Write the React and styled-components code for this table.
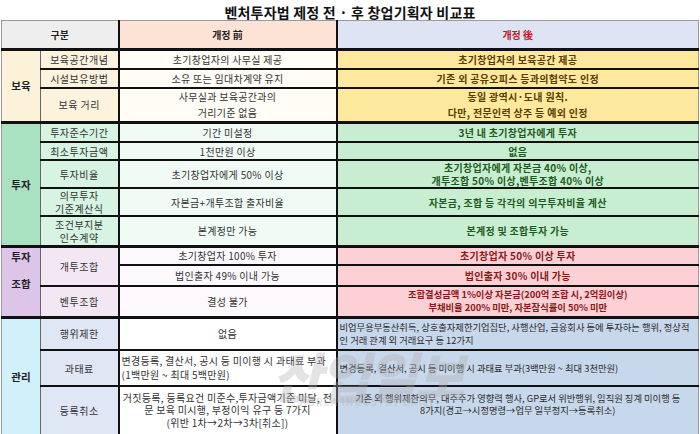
import React from 'react';
import styled, { createGlobalStyle } from 'styled-components';

const Global = createGlobalStyle`
    body {
        margin: 0;
        background: #fff;
        font-family: "Noto Sans CJK KR", "Noto Sans", sans-serif;
        color: #222;
    }
`

const tones = {
    yellow: { cat: '#fcf1d9', sub: '#fcf2dd', before: '#fffdf6', after: '#fde99e', ink: '#5a3b00', bold: true },
    green: { cat: '#a9e2c1', sub: '#d7f3e2', before: '#f1fbf6', after: '#c7eed0', ink: '#1e5a24', bold: true },
    purple: { cat: '#dcc5e8', sub: '#f3e7f4', before: '#fdf8fc', after: '#fdd0d6', ink: '#8a1818', bold: true },
    blue: { cat: '#d2f0f9', sub: '#dfe6f4', before: '#ffffff', after: '#c8d8ec', ink: '#2a2a2a', bold: false },
}

const Page = styled.div`
    position: relative;
    width: 700px;
    height: 434px;
    overflow: hidden;
`

const Title = styled.h1`
    margin: 0;
    height: 20px;
    line-height: 24px;
    text-align: center;
    font-size: 14px;
    font-weight: 700;
    color: #111;
    letter-spacing: 0.2px;
`

const Table = styled.table`
    margin-left: 1px;
    width: 697px;
    table-layout: fixed;
    border-collapse: collapse;
    border: 1px solid #9a9a9a;
`

const Row = styled.tr`
    height: ${p => p.$h}px;
`

const Head = styled.th`
    background: ${p => p.$bg};
    color: ${p => p.$red ? '#c4161c' : '#222'};
    font-size: 10px;
    font-weight: 700;
    text-align: center;
    padding: 0;
    border-bottom: 1px solid #9a9a9a;
    border-right: ${p => p.$last ? '1px solid #9a9a9a' : '2px solid #111'};
`

const Cat = styled.td`
    background: ${p => p.$bg};
    font-size: 10.5px;
    font-weight: 700;
    color: #222;
    text-align: center;
    vertical-align: ${p => p.$top ? 'top' : 'middle'};
    padding: ${p => p.$top ? '1px 0 0' : '0'};
    border-top: 3px solid #111;
    border-right: 1px solid #666;
`

const CatLine = styled.div`
    line-height: 15px;
    & + & {
        margin-top: 12px;
    }
`

const Sub = styled.td`
    background: ${p => p.$bg};
    font-size: 10px;
    letter-spacing: 0.5px;
    color: #333;
    text-align: center;
    line-height: 13px;
    padding: 0;
    border-top: ${p => p.$first ? '3px' : '2px'} solid #111;
    border-right: 2px solid #111;
`

const Cell = styled.td`
    background: ${p => p.$bg};
    color: ${p => p.$ink || '#333'};
    font-weight: ${p => p.$bold ? 700 : 400};
    font-size: ${p => p.$small ? '9.3px' : '10px'};
    letter-spacing: ${p => p.$small ? '0' : '0.3px'};
    text-align: ${p => p.$left ? 'left' : 'center'};
    line-height: ${p => p.$lh}px;
    padding: 0 ${p => p.$left ? '2px' : '0'} ${p => p.$raise || 0}px;
    white-space: nowrap;
    overflow: hidden;
    border-top: ${p => p.$first ? '3px' : '2px'} solid #111;
    border-right: ${p => p.$after ? '1px solid #9a9a9a' : '2px solid #111'};
`

const Watermark = styled.div`
    position: absolute;
    left: 272px;
    top: 346px;
    pointer-events: none;
    text-align: center;
    color: rgba(175, 175, 175, 0.35);
    .big {
        font-size: 54px;
        font-weight: 900;
        font-style: italic;
        line-height: 58px;
        letter-spacing: -2px;
    }
    .small {
        font-size: 10px;
        font-weight: 700;
        letter-spacing: 1px;
        margin-top: -10px;
    }
`

const sections = [
    {
        name: ['보육'], tone: 'yellow', rows: [
            { h: 19, sub: '보육공간개념', before: ['초기창업자의 사무실 제공'], after: ['초기창업자의 보육공간 제공'] },
            { h: 19, sub: '시설보유방법', before: ['소유 또는 임대차계약 유지'], after: ['기존 외 공유오피스 등과의협약도 인정'] },
            { h: 33, lh: 16, sub: '보육 거리', before: ['사무실과 보육공간과의', '거리기준 없음'], after: ['동일 광역시·도내 원칙.', '다만, 전문인력 상주 등 예외 인정'] },
        ]
    },
    {
        name: ['투자'], tone: 'green', rows: [
            { h: 20, sub: '투자준수기간', before: ['기간 미설정'], after: ['3년 내 초기창업자에게 투자'] },
            { h: 18, sub: '최소투자금액', before: ['1천만원 이상'], after: ['없음'] },
            { h: 27, sub: '투자비율', before: ['초기창업자에게 50% 이상'], after: ['초기창업자에게 자본금 40% 이상,', '개투조합 50% 이상,벤투조합 40% 이상'] },
            { h: 28, sub: ['의무투자', '기준계산식'], before: ['자본금+개투조합 출자비율'], after: ['자본금, 조합 등 각각의 의무투자비율 계산'] },
            { h: 30, sub: ['조건부지분', '인수계약'], before: ['본계정만 가능'], after: ['본계정 및 조합투자 가능'] },
        ]
    },
    {
        name: ['투자', '조합'], top: true, tone: 'purple', rows: [
            { h: 19, sub: '개투조합', subSpan: 2, before: ['초기창업자 100% 투자'], after: ['초기창업자 50% 이상 투자'] },
            { h: 21, before: ['법인출자 49% 이내 가능'], after: ['법인출자 30% 이내 가능'] },
            { h: 31, sub: '벤투조합', before: ['결성 불가'], after: ['조합결성금액 1%이상 자본금(200억 조합 시, 2억원이상)', '부채비율 200% 미만, 자본잠식률이 50% 미만'], afterSmall: true },
        ]
    },
    {
        name: ['관리'], tone: 'blue', rows: [
            { h: 33, sub: '행위제한', before: ['없음'], after: ['비업무용부동산취득, 상호출자제한기업집단, 사행산업, 금융회사 등에 투자하는 행위, 정상적', '인 거래 관계 외 거래요구 등 12가지'], afterLeft: true, afterSmall: true },
            { h: 36, lh: 14, sub: '과태료', before: ['변경등록, 결산서, 공시 등 미이행 시 과태료 부과', '(1백만원 ~ 최대 5백만원)'], beforeLeft: true, after: ['변경등록, 결산서, 공시 등 미이행 시 과태료 부과(3백만원 ~ 최대 3천만원)'], afterLeft: true, afterSmall: true },
            { h: 48, lh: 12.5, sub: '등록취소', before: ['거짓등록, 등록요건 미준수,투자금액기준 미달, 전', '문 보육 미시행, 부정이익 유구 등 7가지', '(위반 1차→2차→3차[취소])'], after: ['기존 외 행위제한의무, 대주주가 영향력 행사, GP로서 위반행위, 임직원 징계 미이행 등', '8가지(경고→시정명령→업무 일부정지→등록취소)'], afterSmall: true, afterRaise: 12 },
        ]
    },
]

const Lines = ({ lines }) => {
    const list = Array.isArray(lines) ? lines : [lines];
    return list.map((line, i) => (
        <React.Fragment key={i}>
            {i > 0 && <br />}
            {line}
        </React.Fragment>
    ));
}

const App = () => {
    return (
        <Page>
            <Global />
            <Title>벤처투자법 제정 전 · 후 창업기획자 비교표</Title>
            <Table>
                <colgroup>
                    <col style={{ width: 39 }} />
                    <col style={{ width: 78 }} />
                    <col style={{ width: 218 }} />
                    <col style={{ width: 362 }} />
                </colgroup>
                <tbody>
                    <Row $h={29}>
                        <Head colSpan={2} $bg="#eeeeee">구분</Head>
                        <Head $bg="#fde3d6">개정 前</Head>
                        <Head $bg="#dfe4f5" $red $last>개정 後</Head>
                    </Row>
                    {
                        sections.map(section => {
                            const tone = tones[section.tone];
                            return section.rows.map((row, i) => (
                                <Row key={`${section.tone}-${i}`} $h={row.h}>
                                    {i === 0 && (
                                        <Cat rowSpan={section.rows.length} $bg={tone.cat} $top={section.top}>
                                            {section.name.map(word => <CatLine key={word}>{word}</CatLine>)}
                                        </Cat>
                                    )}
                                    {row.sub && (
                                        <Sub rowSpan={row.subSpan || 1} $bg={tone.sub} $first={i === 0}>
                                            <Lines lines={row.sub} />
                                        </Sub>
                                    )}
                                    <Cell $bg={tone.before} $first={i === 0} $left={row.beforeLeft} $lh={row.lh || 13}>
                                        <Lines lines={row.before} />
                                    </Cell>
                                    <Cell
                                        $bg={tone.after}
                                        $after
                                        $first={i === 0}
                                        $ink={tone.ink}
                                        $bold={tone.bold}
                                        $left={row.afterLeft}
                                        $small={row.afterSmall}
                                        $raise={row.afterRaise}
                                        $lh={row.lh || 13}
                                    >
                                        <Lines lines={row.after} />
                                    </Cell>
                                </Row>
                            ));
                        })
                    }
                </tbody>
            </Table>
            <Watermark>
                <div className="big">산업일보</div>
                <div className="small">KOREA INDUSTRY DAILY</div>
            </Watermark>
        </Page>
    );
}

export default App;
